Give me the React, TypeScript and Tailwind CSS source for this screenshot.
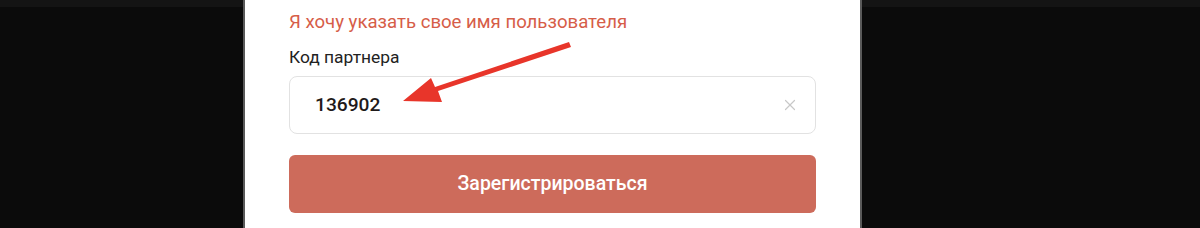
import { X } from "lucide-react";

function Arrow() {
  return (
    <svg
      className="pointer-events-none absolute left-0 top-0"
      width="1200"
      height="228"
      viewBox="0 0 1200 228"
    >
      <path d="M569 42 L571 47 L438 91 L442 102 L403 101 L431 78 L435 87 Z" fill="#e8352a" />
    </svg>
  );
}

export default function App() {
  return (
    <div
      className="relative flex h-[228px] w-[1200px] overflow-hidden bg-[#0b0b0b]"
      style={{ fontFamily: "Roboto, 'Noto Sans', sans-serif" }}
    >
      <div className="flex w-[243px] flex-col">
        <div className="h-[7px] bg-[#141414]" />
      </div>
      <div className="w-[619px] border-x-2 border-[#5a5a5a] bg-white px-[44px] pt-[10px]">
        <p className="text-[18.6px] leading-[24px] text-[#d65d48]">
          Я хочу указать свое имя пользователя
        </p>
        <p className="mt-[11px] text-[17.4px] leading-[24px] text-[#222]">Код партнера</p>
        <div className="mt-[7px] flex h-[58px] items-center justify-between rounded-[8px] border border-[#e2e2e2] pl-[25px] pr-[16px]">
          <span className="text-[19.2px] font-medium text-[#1f1a1a]">136902</span>
          <X className="h-[18px] w-[18px] text-[#c8c8c8]" strokeWidth={1.6} />
        </div>
        <button className="mt-[21px] flex h-[58px] w-full items-center justify-center rounded-[6px] bg-[#cd6b5b] text-[19.5px] font-medium text-white">
          Зарегистрироваться
        </button>
      </div>
      <div className="flex flex-1 flex-col">
        <div className="h-[7px] bg-[#141414]" />
      </div>
      <Arrow />
    </div>
  );
}
